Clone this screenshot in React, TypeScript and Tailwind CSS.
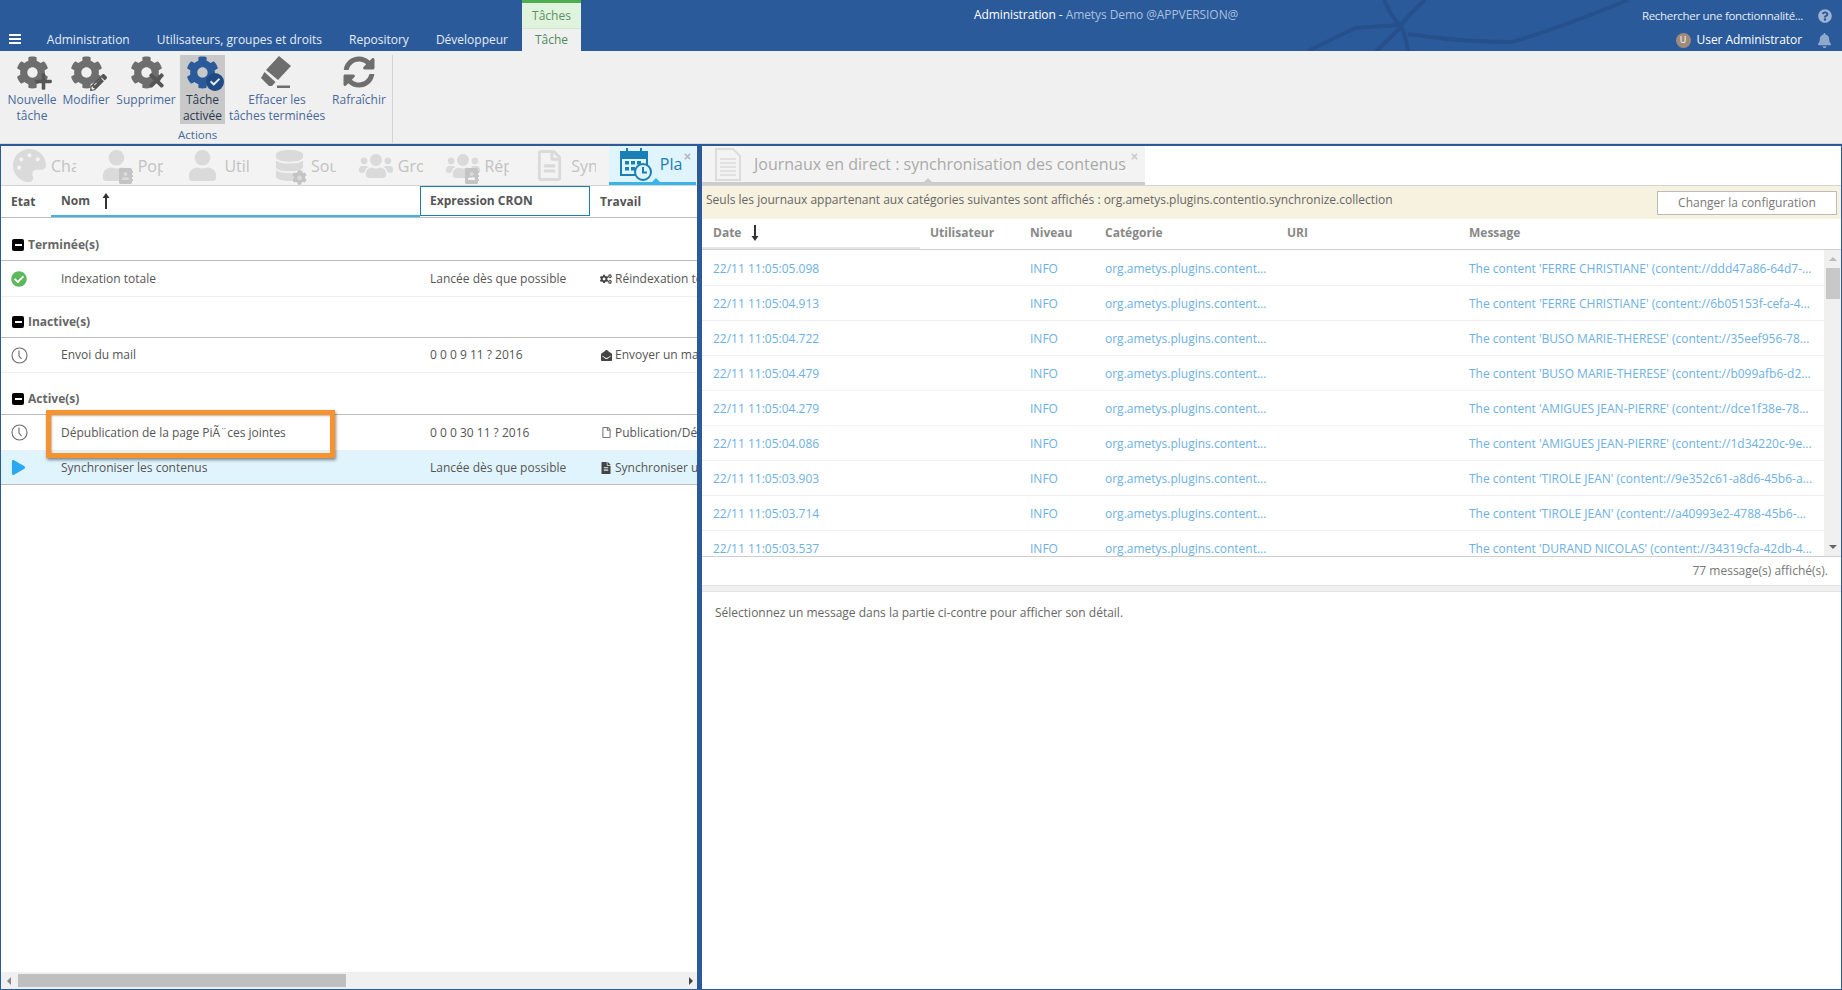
import { ReactNode } from "react";
import {
  FaBell,
  FaCheckCircle,
  FaCog,
  FaCogs,
  FaDatabase,
  FaEnvelopeOpen,
  FaPalette,
  FaPencilAlt,
  FaPlay,
  FaPlus,
  FaQuestionCircle,
  FaRegFile,
  FaRegFileAlt,
  FaSyncAlt,
  FaTimes,
  FaUser,
  FaUsers,
  FaAddressBook,
  FaCheck,
  FaFileAlt,
} from "react-icons/fa";

const font = "font-['Open_Sans','Noto_Sans',sans-serif]";

const logs = [
  ["22/11 11:05:05.098", "The content 'FERRE CHRISTIANE' (content://ddd47a86-64d7-..."],
  ["22/11 11:05:04.913", "The content 'FERRE CHRISTIANE' (content://6b05153f-cefa-4..."],
  ["22/11 11:05:04.722", "The content 'BUSO MARIE-THERESE' (content://35eef956-78..."],
  ["22/11 11:05:04.479", "The content 'BUSO MARIE-THERESE' (content://b099afb6-d2..."],
  ["22/11 11:05:04.279", "The content 'AMIGUES JEAN-PIERRE' (content://dce1f38e-78..."],
  ["22/11 11:05:04.086", "The content 'AMIGUES JEAN-PIERRE' (content://1d34220c-9e..."],
  ["22/11 11:05:03.903", "The content 'TIROLE JEAN' (content://9e352c61-a8d6-45b6-a..."],
  ["22/11 11:05:03.714", "The content 'TIROLE JEAN' (content://a40993e2-4788-45b6-..."],
  ["22/11 11:05:03.537", "The content 'DURAND NICOLAS' (content://34319cfa-42db-4..."],
];

function Eraser() {
  return (
    <svg width="34" height="34" viewBox="0 0 34 34" fill="#6e6e6e">
      <path d="M19 1 L31 11 L18 25 L6 15 Z" />
      <path d="M4.5 17 L15.5 27 L12 31 L9 31 L1 23 Z" />
      <rect x="17" y="30.5" width="13" height="2.5" />
    </svg>
  );
}

function CalendarClock() {
  return (
    <svg width="32" height="34" viewBox="0 0 32 34">
      <rect x="1" y="5" width="26" height="23" fill="none" stroke="#1a7fb5" strokeWidth="2" />
      <rect x="1" y="5" width="26" height="7" fill="#1a7fb5" />
      <rect x="6" y="1" width="2" height="7" fill="#1a7fb5" />
      <rect x="20" y="1" width="2" height="7" fill="#1a7fb5" />
      <g fill="#1a7fb5">
        <rect x="5" y="14" width="4" height="3.5" />
        <rect x="11" y="14" width="4" height="3.5" />
        <rect x="17" y="14" width="4" height="3.5" />
        <rect x="5" y="20" width="4" height="3.5" />
        <rect x="11" y="20" width="4" height="3.5" />
      </g>
      <circle cx="23" cy="25" r="8" fill="#e0f4fd" stroke="#1a7fb5" strokeWidth="2" />
      <path d="M23 20 V25.5 H27" fill="none" stroke="#1a7fb5" strokeWidth="2" />
    </svg>
  );
}

function ClockIcon() {
  return (
    <svg width="17" height="17" viewBox="0 0 17 17" fill="none" stroke="#6a6a6a">
      <circle cx="8.5" cy="8.5" r="7.5" strokeWidth="1.1" />
      <path d="M8 3.5 V9 L10.5 12" strokeWidth="1.1" />
    </svg>
  );
}

function HeaderLines() {
  return (
    <svg className="absolute left-[1300px] top-0" width="340" height="51" viewBox="0 0 340 51" fill="none" stroke="#25508c" strokeWidth="4">
      <path d="M8 51 L55 28 L100 25" strokeWidth="4" />
      <path d="M84 0 Q92 18 100 25 Q105 32 108 51" />
      <path d="M125 0 Q105 18 100 28 Q88 40 76 51" />
      <path d="M108 34 Q160 42 212 42 Q260 28 328 0" />
    </svg>
  );
}

function RibbonButton(props: { label: ReactNode; icon: ReactNode; width: string; active?: boolean }) {
  return (
    <div
      className={`flex h-[69px] shrink-0 flex-col items-center ${props.width} ${props.active ? "bg-[#c8c8c8] text-[#2a3a50]" : "text-[#48699a]"}`}
    >
      <div className="relative flex h-[34px] w-[40px] items-center justify-center">{props.icon}</div>
      <div className="mt-[3px] text-center text-[12px] leading-[16px]">{props.label}</div>
    </div>
  );
}

function GearIcon(props: { overlay: ReactNode; color?: string }) {
  return (
    <>
      <FaCog size={33} color={props.color ?? "#6e6e6e"} />
      <span className="absolute bottom-[-2px] right-[-1px]">{props.overlay}</span>
    </>
  );
}

function TabItem(props: { icon: ReactNode; label: string }) {
  return (
    <div className="flex w-[86.7px] shrink-0 items-center gap-[4px] pl-[10px] text-[#c2c2c2]">
      <div className="relative flex h-[34px] w-[35px] shrink-0 items-center justify-center text-[#dadada]">{props.icon}</div>
      <span className="w-[25px] overflow-hidden text-[16px] whitespace-nowrap">{props.label}</span>
    </div>
  );
}

function BookBadge() {
  return <FaAddressBook size={16} className="absolute right-0 bottom-[-1px] text-[#c4c4c4]" />;
}

function TabCaret(props: { color: string }) {
  return <span className={`absolute bottom-0 left-1/2 h-0 w-0 border-x-[4px] border-b-[4px] border-x-transparent ${props.color}`} />;
}

function GroupRow(props: { label: string; top: string }) {
  return (
    <div className={`flex h-[32px] items-center gap-[4px] border-b border-[#bdbdbd] pl-[11px] ${props.top}`}>
      <span className="flex h-[12px] w-[12px] items-center justify-center rounded-[2px] bg-black">
        <span className="h-[2px] w-[7px] bg-white" />
      </span>
      <span className="text-[12px] font-bold text-[#666]">{props.label}</span>
    </div>
  );
}

function TaskRow(props: { state: ReactNode; name: string; cron: string; jobIcon: ReactNode; job: string; height: string; selected?: boolean }) {
  return (
    <div
      className={`flex items-center text-[12px] text-[#555] ${props.height} ${props.selected ? "border-b border-[#bdbdbd] bg-[#e0f4fd]" : "border-b border-[#eeeeee]"}`}
    >
      <div className="flex w-[50px] shrink-0 items-center pl-[10px]">{props.state}</div>
      <div className="w-[369px] shrink-0 pl-[10px] whitespace-nowrap">{props.name}</div>
      <div className="w-[170px] shrink-0 pl-[10px] whitespace-nowrap">{props.cron}</div>
      <div className="flex min-w-0 flex-1 items-center gap-[3px] overflow-hidden pl-[10px] whitespace-nowrap">
        <span className="flex w-[12px] shrink-0 justify-center text-[#444]">{props.jobIcon}</span>
        {props.job}
      </div>
    </div>
  );
}

export default function App() {
  return (
    <div className={`flex h-[990px] w-[1842px] flex-col overflow-hidden bg-white ${font}`}>
      {/* bandeau */}
      <div className="relative flex h-[51px] shrink-0 bg-[#2b5a9b] text-[12px] text-[#e4ecf6]">
        <HeaderLines />
        <div className="flex w-[581px] shrink-0 items-end">
          <div className="mb-[7px] ml-[9px] flex w-[12px] flex-col gap-[2px]">
            <span className="h-[2px] bg-white" />
            <span className="h-[2px] bg-white" />
            <span className="h-[2px] bg-white" />
          </div>
          <div className="ml-[26px] flex h-[22px] items-center gap-[27px] whitespace-nowrap">
            <span>Administration</span>
            <span>Utilisateurs, groupes et droits</span>
            <span>Repository</span>
            <span>Développeur</span>
          </div>
          <div className="ml-[14px] flex h-[51px] w-[59px] shrink-0 flex-col text-center">
            <div className="h-[29px] border-t-[3px] border-b border-t-[#4cae4f] border-b-[#d0e8cf] bg-[#dff3dd] pt-[4px] text-[#5f8f68]">Tâches</div>
            <div className="flex flex-1 items-center justify-center bg-[#f0f0f0] text-[#4f8a5c]">Tâche</div>
          </div>
        </div>
        <div className="relative ml-[393px] pt-[6px] tracking-[-0.08px] whitespace-nowrap">
          <span className="text-white">Administration - </span>
          <span className="text-[#aac1de]">Ametys Demo @APPVERSION@</span>
        </div>
        <div className="relative ml-auto flex flex-col items-end pr-[10px]">
          <div className="mt-[7px] flex h-[17px] items-center gap-[15px] text-[11.5px] tracking-[-0.3px]">
            <span>Rechercher une fonctionnalité...</span>
            <FaQuestionCircle size={14} color="#9db4d4" />
          </div>
          <div className="mt-[6px] flex h-[20px] items-center gap-[15px]">
            <div className="flex items-center gap-[6px] text-white tracking-[-0.07px]">
              <span className="flex h-[15px] w-[15px] items-center justify-center rounded-full bg-[#a08a7c] text-[9px]">U</span>
              <span>User Administrator</span>
            </div>
            <FaBell size={15} color="#8fa9cd" />
          </div>
        </div>
      </div>

      {/* ruban */}
      <div className="flex h-[93px] shrink-0 border-b border-[#d9d9d9] bg-[#f0f0f0] pt-[4px] pl-[6px]">
        <div className="flex w-[387px] flex-col border-r border-[#d4d4d4]">
          <div className="flex h-[69px]">
            <RibbonButton width="w-[52px]" label={<>Nouvelle<br />tâche</>} icon={<GearIcon overlay={<FaPlus size={19} color="#555" />} />} />
            <RibbonButton width="w-[56px]" label="Modifier" icon={<GearIcon overlay={<FaPencilAlt size={17} color="#555" />} />} />
            <RibbonButton width="w-[64px]" label="Supprimer" icon={<GearIcon overlay={<FaTimes size={21} color="#555" />} />} />
            <div className="ml-[2px]">
              <RibbonButton
                width="w-[45px]"
                active
                label={<>Tâche<br />activée</>}
                icon={
                  <GearIcon
                    color="#2b5a9b"
                    overlay={
                      <span className="flex h-[18px] w-[18px] items-center justify-center rounded-full bg-[#1f4a85]">
                        <FaCheck size={10} color="#e4ecf6" />
                      </span>
                    }
                  />
                }
              />
            </div>
            <div className="ml-[2px]">
              <RibbonButton width="w-[100px]" label={<>Effacer les<br />tâches terminées</>} icon={<Eraser />} />
            </div>
            <div className="ml-[4px]">
              <RibbonButton width="w-[56px]" label="Rafraîchir" icon={<FaSyncAlt size={32} color="#6e6e6e" />} />
            </div>
          </div>
          <div className="mt-[2px] ml-[172px] w-[36px] text-center text-[11.5px] text-[#48699a]">Actions</div>
        </div>
      </div>

      {/* panneaux */}
      <div className="flex min-h-0 flex-1 border-t-[2px] border-b border-[#2b5a9b]">
        {/* planificateur */}
        <div className="flex w-[697px] shrink-0 flex-col border-l border-[#2b5a9b]">
          <div className="flex h-[40px] shrink-0 border-b border-[#d4d4d4] bg-[#f3f3f3] pl-[1px]">
            <TabItem icon={<FaPalette size={33} />} label="Chargement" />
            <TabItem icon={<><FaUser size={31} /><BookBadge /></>} label="Population" />
            <TabItem icon={<FaUser size={31} />} label="Utilisateurs" />
            <TabItem
              icon={<><FaDatabase size={31} /><FaCog size={15} className="absolute right-0 bottom-[-2px] text-[#c4c4c4]" /></>}
              label="Sources"
            />
            <TabItem icon={<FaUsers size={34} />} label="Groupes" />
            <TabItem icon={<><FaUsers size={34} /><BookBadge /></>} label="Répertoires" />
            <TabItem icon={<FaRegFileAlt size={31} />} label="Synchronisation" />
            <div className="relative flex w-[87px] shrink-0 items-center gap-[8px] border-b-[3px] border-[#3bb4ea] bg-[#e0f4fd] pl-[11px]">
              <CalendarClock />
              <span className="w-[23px] overflow-hidden text-[16px] text-[#1a7fb5]">Planificateur</span>
              <FaTimes size={9} className="absolute top-[6px] right-[4px] text-[#bbb]" />
              <TabCaret color="border-b-[#3bb4ea]" />
            </div>
          </div>
          <div className="flex h-[32px] shrink-0 border-b border-[#bdbdbd] text-[12px] font-bold text-[#555]">
            <div className="flex w-[50px] shrink-0 items-center pl-[10px]">Etat</div>
            <div className="flex w-[369px] shrink-0 items-center gap-[12px] border-b-[2px] border-[#3bb4ea] pl-[10px]">
              Nom
              <svg width="8" height="16" viewBox="0 0 8 16" fill="#333"><path d="M4 0 L7.5 5 H5 V16 H3 V5 H0.5 Z" /></svg>
            </div>
            <div className="flex h-[30px] w-[170px] shrink-0 items-center border border-[#1a7fb5] pl-[9px]">Expression CRON</div>
            <div className="flex flex-1 items-center pl-[10px]">Travail</div>
          </div>
          <div className="relative min-h-0 flex-1">
            <GroupRow label="Terminée(s)" top="mt-[11px]" />
            <TaskRow
              height="h-[36px]"
              state={<FaCheckCircle size={16} color="#5cb85c" />}
              name="Indexation totale"
              cron="Lancée dès que possible"
              jobIcon={<FaCogs size={12} />}
              job="Réindexation totale"
            />
            <GroupRow label="Inactive(s)" top="mt-[9px]" />
            <TaskRow
              height="h-[35px]"
              state={<ClockIcon />}
              name="Envoi du mail"
              cron="0 0 0 9 11 ? 2016"
              jobIcon={<FaEnvelopeOpen size={11} />}
              job="Envoyer un mail"
            />
            <GroupRow label="Active(s)" top="mt-[10px]" />
            <TaskRow
              height="h-[36px]"
              state={<ClockIcon />}
              name="Dépublication de la page PiÃ¨ces jointes"
              cron="0 0 0 30 11 ? 2016"
              jobIcon={<FaRegFile size={11} color="#777" />}
              job="Publication/Dépublication"
            />
            <TaskRow
              height="h-[34px]"
              selected
              state={<FaPlay size={15} color="#2aa9f2" />}
              name="Synchroniser les contenus"
              cron="Lancée dès que possible"
              jobIcon={<FaFileAlt size={12} />}
              job="Synchroniser une collection"
            />
            {/* encadré orange */}
            <div className="absolute top-[192px] left-[45px] h-[48px] w-[289px] border-[5px] border-[#f7932f] shadow-[1px_2px_3px_rgba(0,0,0,0.45),inset_1px_1px_2px_rgba(0,0,0,0.3)]" />
          </div>
          {/* ascenseur horizontal */}
          <div className="flex h-[17px] shrink-0 items-center bg-[#f0f0f0] pr-[4px] pl-[6px]">
            <span className="h-0 w-0 border-y-[4px] border-r-[4px] border-y-transparent border-r-[#888]" />
            <div className="ml-[7px] h-[13px] w-[328px] bg-[#bfbfbf]" />
            <span className="ml-auto h-0 w-0 border-y-[4px] border-l-[4px] border-y-transparent border-l-[#444]" />
          </div>
        </div>

        <div className="w-[5px] shrink-0 bg-[#2b5a9b]" />

        {/* journaux */}
        <div className="flex min-w-0 flex-1 flex-col border-r border-[#2b5a9b]">
          <div className="flex h-[40px] shrink-0 border-b border-[#d4d4d4]">
            <div className="relative flex w-[443px] items-center gap-[13px] border-b-[3px] border-[#cccccc] bg-[#f3f3f3] pl-[13px]">
              <svg width="26" height="33" viewBox="0 0 26 33" fill="none" stroke="#dcdcdc" strokeWidth="2">
                <path d="M1 1 H18 L25 8 V32 H1 Z" />
                <path d="M5 11 H21 M5 15 H21 M5 19 H21 M5 23 H21 M5 27 H21" strokeWidth="1.5" />
              </svg>
              <span className="text-[16px] whitespace-nowrap text-[#aaa]">Journaux en direct : synchronisation des contenus</span>
              <FaTimes size={9} className="absolute top-[6px] right-[6px] text-[#ccc]" />
              <TabCaret color="border-b-[#cccccc]" />
            </div>
          </div>
          <div className="flex h-[33px] shrink-0 items-center justify-between bg-[#f7f1df] pr-[4px] pl-[4px] text-[12px] text-[#666]">
            <span className="pb-[5px]">Seuls les journaux appartenant aux catégories suivantes sont affichés : org.ametys.plugins.contentio.synchronize.collection</span>
            <div className="flex h-[24px] w-[180px] items-center justify-center border border-[#bbb] bg-white text-[#777]">Changer la configuration</div>
          </div>
          <div className="flex h-[31px] shrink-0 border-b border-[#cfcfcf] text-[12px] font-bold text-[#888]">
            <div className="flex w-[218px] items-center gap-[10px] border-b-[2px] border-[#e4e4e4] pl-[11px]">
              Date
              <svg width="8" height="16" viewBox="0 0 8 16" fill="#333"><path d="M4 16 L7.5 11 H5 V0 H3 V11 H0.5 Z" /></svg>
            </div>
            <div className="flex w-[100px] items-center pb-[2px] pl-[10px]">Utilisateur</div>
            <div className="flex w-[75px] items-center pb-[2px] pl-[10px]">Niveau</div>
            <div className="flex w-[182px] items-center pb-[2px] pl-[10px]">Catégorie</div>
            <div className="flex w-[182px] items-center pb-[2px] pl-[10px]">URI</div>
            <div className="flex flex-1 items-center pb-[2px] pl-[10px]">Message</div>
          </div>
          <div className="flex h-[307px] shrink-0 border-b border-[#cfcfcf]">
            <div className="min-w-0 flex-1 overflow-hidden pt-[1px] text-[12px] text-[#6db0e3]">
              {logs.map((log) => (
                <div key={log[0]} className="flex h-[35px] shrink-0 items-center border-b border-[#f0f0f0] pt-[1px] whitespace-nowrap">
                  <div className="w-[218px] pl-[11px]">{log[0]}</div>
                  <div className="w-[100px]" />
                  <div className="w-[75px] pl-[10px]">INFO</div>
                  <div className="w-[182px] pl-[10px]">org.ametys.plugins.content...</div>
                  <div className="w-[182px]" />
                  <div className="flex-1 pl-[10px]">{log[1]}</div>
                </div>
              ))}
            </div>
            <div className="flex w-[17px] shrink-0 flex-col items-center bg-[#f0f0f0] pt-[7px] pb-[7px]">
              <span className="h-0 w-0 border-x-[4px] border-b-[4px] border-x-transparent border-b-[#bbb]" />
              <div className="mt-[7px] h-[31px] w-[14px] bg-[#c8c8c8]" />
              <span className="mt-auto h-0 w-0 border-x-[4px] border-t-[4px] border-x-transparent border-t-[#666]" />
            </div>
          </div>
          <div className="flex h-[29px] shrink-0 items-center justify-end border-b border-[#e2e2e2] pr-[13px] text-[12px] text-[#777]">77 message(s) affiché(s).</div>
          <div className="h-[6px] shrink-0 border-b border-[#e2e2e2] bg-[#f0f0f0]" />
          <div className="min-h-0 flex-1 pt-[12px] pl-[13px] text-[12px] text-[#666]">
            Sélectionnez un message dans la partie ci-contre pour afficher son détail.
          </div>
        </div>
      </div>
    </div>
  );
}
